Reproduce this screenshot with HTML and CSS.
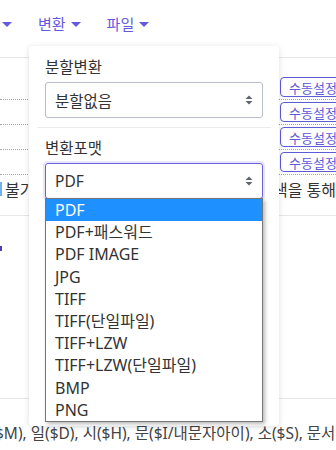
FILE: index.html
```html
<!DOCTYPE html>
<html lang="ko">
<head>
<meta charset="utf-8">
<link rel="stylesheet" href="styles.css">
</head>
<body>
<div class="page">
  <nav class="nav">
    <span class="nav-item"><span class="caret"></span></span>
    <span class="nav-item">변환<span class="caret"></span></span>
    <span class="nav-item">파일<span class="caret"></span></span>
  </nav>
  <div class="spacer"></div>
  <div class="row dotted"><span class="btn">수동설정</span></div>
  <div class="row dotted"><span class="btn">수동설정</span></div>
  <div class="row dotted"><span class="btn">수동설정</span></div>
  <div class="row dotted"><span class="btn">수동설정</span></div>
  <div class="row text-row">
    <span class="left-cell"><span class="sel-mark"></span>불가</span>
    <span class="right-cell">색을 통해</span>
  </div>
  <div class="row tall-row"><span class="dot-mark"></span></div>
  <div class="bottom-text">$M), 일($D), 시($H), 문($I/내문자아이), 소($S), 문서</div>

  <div class="panel">
    <div class="label">분할변환</div>
    <div class="select">
      <span>분할없음</span>
      <svg class="arrows" width="8" height="10" viewBox="0 0 8 10"><path d="M4 0.5L7.5 4H0.5Z M4 9.5L7.5 6H0.5Z" fill="#5f6470"/></svg>
    </div>
    <div class="divider"></div>
    <div class="label">변환포맷</div>
    <div class="select focused">
      <span>PDF</span>
      <svg class="arrows" width="8" height="10" viewBox="0 0 8 10"><path d="M4 0.5L7.5 4H0.5Z M4 9.5L7.5 6H0.5Z" fill="#5f6470"/></svg>
    </div>
    <ul class="options">
      <li class="active">PDF</li>
      <li>PDF+패스워드</li>
      <li>PDF IMAGE</li>
      <li>JPG</li>
      <li>TIFF</li>
      <li>TIFF(단일파일)</li>
      <li>TIFF+LZW</li>
      <li>TIFF+LZW(단일파일)</li>
      <li>BMP</li>
      <li>PNG</li>
    </ul>
  </div>
</div>
</body>
</html>
```
FILE: styles.css
```css
* { box-sizing: border-box; }
html, body { margin: 0; padding: 0; }
body {
  width: 336px;
  height: 450px;
  overflow: hidden;
  background: #fff;
  font-family: "Noto Sans", "Noto Sans CJK KR", sans-serif;
  color: #333;
}
.page { position: relative; width: 336px; height: 450px; overflow: hidden; }

.nav {
  height: 58px;
  border-bottom: 1px solid #e6e6e6;
  display: flex;
  align-items: center;
  gap: 26px;
  padding-left: 2px;
  padding-bottom: 9px;
  color: #6459dc;
  font-size: 15px;
  line-height: 22px;
}
.nav-item { display: flex; align-items: center; gap: 5px; }
.caret {
  width: 0; height: 0;
  border-left: 5px solid transparent;
  border-right: 5px solid transparent;
  border-top: 5px solid #6459dc;
}

.spacer { height: 17px; }
.row { width: 100%; }
.dotted {
  height: 25px;
  border-bottom: 1px dotted #a8a8a8;
  display: flex;
  align-items: flex-start;
  padding-top: 2px;
  padding-left: 280px;
}
.btn {
  display: inline-flex;
  align-items: center;
  height: 20px;
  padding: 0 8px;
  border: 1px solid #5f5ad8;
  border-radius: 4px;
  color: #5f5ad8;
  font-size: 13px;
  white-space: nowrap;
}
.text-row {
  height: 41px;
  border-bottom: 1px solid #e6e6e6;
  display: flex;
  align-items: center;
  padding-bottom: 13px;
  font-size: 16px;
  white-space: nowrap;
}
.left-cell { width: 281px; display: flex; align-items: center; gap: 3px; overflow: hidden; }
.sel-mark { width: 2px; height: 14px; background: #6fb3ee; }
.right-cell { color: #333; }
.tall-row {
  height: 183px;
  border-bottom: 1px solid #e6e6e6;
  padding-top: 30px;
}
.dot-mark { display: block; width: 2px; height: 5px; background: #4a3fb0; }
.bottom-text {
  margin-left: -5px;
  padding-top: 24px;
  font-size: 15.5px;
  line-height: 20px;
  color: #444;
  white-space: nowrap;
}

.panel {
  position: absolute;
  left: 29px;
  top: 46px;
  width: 250px;
  height: 380px;
  background: #fff;
  border-radius: 4px;
  box-shadow: 0 1px 6px rgba(0,0,0,0.13);
  padding: 10px 16px 0;
}
.label { font-size: 15.5px; line-height: 22px; color: #333; margin-bottom: 4px; }
.select {
  height: 36px;
  border: 1px solid #b9bdc8;
  border-radius: 3px;
  display: flex;
  align-items: center;
  justify-content: space-between;
  padding: 0 9px 0 9px;
  font-size: 15.5px;
  color: #333;
}
.select.focused {
  border-color: #6a60dc;
  box-shadow: 0 0 0 2px rgba(120,110,230,0.18);
}
.divider { height: 1px; background: #ececec; margin: 9px -8px 9px; }
.options {
  list-style: none;
  margin: -1px 0 0;
  padding: 0;
  border: 1px solid #767676;
  box-shadow: 2px 2px 4px rgba(0,0,0,0.28);
  background: #fff;
}
.options li {
  height: 22.2px;
  line-height: 22px;
  padding-left: 9px;
  font-size: 16px;
  color: #333;
}
.options li.active { background: #1e90ff; color: #fff; }
```
